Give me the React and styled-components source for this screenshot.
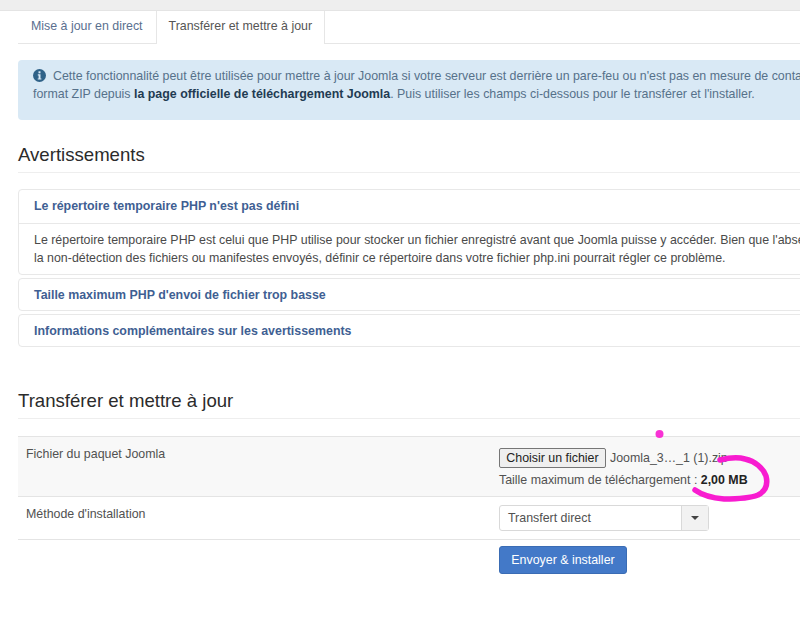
import styled, { createGlobalStyle } from 'styled-components';

const GlobalStyle = createGlobalStyle`
  html, body {
    margin: 0;
    padding: 0;
    background: #fff;
    overflow: hidden;
  }
  body {
    font-family: "Liberation Sans", Arial, sans-serif;
    font-size: 12.4px;
    line-height: 18px;
    color: #515151;
  }
`;

const Page = styled.div`
  position: relative;
  width: 800px;
  height: 623px;
  overflow: hidden;
`;

const TopBar = styled.div`
  height: 10px;
  background: #eeeeee;
  border-bottom: 1px solid #e4e4e4;
`;

const Content = styled.div`
  width: 1100px;
  padding-left: 18px;
`;

const Tabs = styled.div`
  display: flex;
  height: 32px;
  border-bottom: 1px solid #e6e6e6;
`;

const Tab = styled.div`
  padding: 6px 12px 0;
  margin-bottom: ${(p) => (p.$active ? '-1px' : '0')};
  background: #fff;
  color: ${(p) => (p.$active ? '#555555' : '#5a6f8f')};
  border-left: 1px solid ${(p) => (p.$active ? '#e6e6e6' : 'transparent')};
  border-right: 1px solid ${(p) => (p.$active ? '#e6e6e6' : 'transparent')};
`;

const Alert = styled.div`
  margin-top: 16px;
  height: 60px;
  box-sizing: border-box;
  padding: 8px 15px;
  background: #d9e9f5;
  border-radius: 4px;
  color: #56718a;
  white-space: nowrap;
  line-height: 17.5px;

  strong {
    color: #1f3b52;
  }
`;

const InfoIcon = styled.svg`
  width: 13px;
  height: 13px;
  margin-right: 7px;
  vertical-align: -2px;
`;

const Title = styled.h2`
  margin: ${(p) => p.$top} 0 0;
  height: 29px;
  box-sizing: border-box;
  border-bottom: 1px solid #eeeeee;
  font-size: 18.6px;
  line-height: 22px;
  font-weight: 400;
  color: #2b2b2b;
`;

const Accordion = styled.div`
  margin-top: 16px;
  display: flex;
  flex-direction: column;
  gap: 3px;
`;

const Group = styled.div`
  border: 1px solid #e8e8e8;
  border-radius: 4px;
`;

const GroupHead = styled.div`
  padding: 7px 14px 5px 15px;
  height: 19px;
  font-weight: 700;
  color: #3f5f93;
`;

const GroupBody = styled.div`
  margin-top: 2px;
  padding: 8px 15px 7px;
  border-top: 1px solid #e8e8e8;
  white-space: nowrap;
  line-height: 17.5px;
  color: #4a4a4a;
`;

const FormTable = styled.div`
  margin-top: 17px;
`;

const Row = styled.div`
  display: grid;
  grid-template-columns: 481px 1fr;
  min-height: ${(p) => p.$height};
  box-sizing: border-box;
  border-top: 1px solid #e4e4e4;
  background: ${(p) => (p.$striped ? '#f8f8f8' : '#fff')};
`;

const RowLabel = styled.div`
  padding: 8px;
`;

const RowValue = styled.div`
  padding-top: ${(p) => p.$top};
  color: #515151;
`;

const FileLine = styled.div`
  display: flex;
  align-items: center;
  height: 22px;
`;

const FileButton = styled.div`
  box-sizing: border-box;
  width: 107px;
  height: 20px;
  margin-right: 4px;
  background: #efefef;
  border: 1px solid #767676;
  border-radius: 2px;
  color: #222;
  text-align: center;
  line-height: 18px;
`;

const MaxSize = styled.div`
  margin-top: 2px;
  white-space: nowrap;

  strong {
    color: #222;
  }
`;

const SelectBox = styled.div`
  display: flex;
  width: 210px;
  height: 26px;
  box-sizing: border-box;
  border: 1px solid #d9d9d9;
  border-radius: 3px;
`;

const SelectText = styled.div`
  flex: 1;
  padding-left: 8px;
  line-height: 24px;
`;

const SelectArrow = styled.div`
  width: 26px;
  display: flex;
  align-items: center;
  justify-content: center;
  background: #f2f2f2;
  border-left: 1px solid #d9d9d9;

  &::after {
    content: '';
    border-left: 4px solid transparent;
    border-right: 4px solid transparent;
    border-top: 4px solid #444;
  }
`;

const SubmitRow = styled.div`
  border-top: 1px solid #e4e4e4;
  padding: 6px 0 0 481px;
`;

const SubmitButton = styled.div`
  box-sizing: border-box;
  width: 128px;
  height: 28px;
  background: #4379c8;
  border: 1px solid #3a6cb4;
  border-radius: 3px;
  color: #fff;
  text-align: center;
  line-height: 26px;
`;

const Scribble = styled.svg`
  position: absolute;
  left: 0;
  top: 0;
  width: 800px;
  height: 623px;
  pointer-events: none;
`;

const App = () => {
  return (
    <Page>
      <GlobalStyle />
      <TopBar />
      <Content>
        <Tabs>
          <Tab>Mise à jour en direct</Tab>
          <Tab $active>Transférer et mettre à jour</Tab>
        </Tabs>
        <Alert>
          <InfoIcon viewBox="0 0 13 13">
            <circle cx="6.5" cy="6.5" r="6.5" fill="#2f6288" />
            <rect x="5.5" y="2.3" width="2" height="2" fill="#d9e9f5" />
            <path d="M4.8 5.3h2.7v4.2h.9v1.1H4.7V9.5h.9V6.4h-.8z" fill="#d9e9f5" />
          </InfoIcon>
          Cette fonctionnalité peut être utilisée pour mettre à jour Joomla si votre serveur est derrière un pare-feu ou n'est pas en mesure de contacter le serveur de mise à jour.
          <br />
          format ZIP depuis <strong>la page officielle de téléchargement Joomla</strong>. Puis utiliser les champs ci-dessous pour le transférer et l'installer.
        </Alert>
        <Title $top="24px">Avertissements</Title>
        <Accordion>
          <Group>
            <GroupHead>Le répertoire temporaire PHP n'est pas défini</GroupHead>
            <GroupBody>
              Le répertoire temporaire PHP est celui que PHP utilise pour stocker un fichier enregistré avant que Joomla puisse y accéder. Bien que l'absence de ce paramètre
              <br />
              la non-détection des fichiers ou manifestes envoyés, définir ce répertoire dans votre fichier php.ini pourrait régler ce problème.
            </GroupBody>
          </Group>
          <Group>
            <GroupHead>Taille maximum PHP d'envoi de fichier trop basse</GroupHead>
          </Group>
          <Group>
            <GroupHead>Informations complémentaires sur les avertissements</GroupHead>
          </Group>
        </Accordion>
        <Title $top="43px">Transférer et mettre à jour</Title>
        <FormTable>
          <Row $striped $height="60px">
            <RowLabel>Fichier du paquet Joomla</RowLabel>
            <RowValue $top="10px">
              <FileLine>
                <FileButton>Choisir un fichier</FileButton>
                Joomla_3…_1 (1).zip
              </FileLine>
              <MaxSize>
                Taille maximum de téléchargement : <strong>2,00 MB</strong>
              </MaxSize>
            </RowValue>
          </Row>
          <Row $height="43px">
            <RowLabel>Méthode d'installation</RowLabel>
            <RowValue $top="8px">
              <SelectBox>
                <SelectText>Transfert direct</SelectText>
                <SelectArrow />
              </SelectBox>
            </RowValue>
          </Row>
          <SubmitRow>
            <SubmitButton>Envoyer &amp; installer</SubmitButton>
          </SubmitRow>
        </FormTable>
      </Content>
      <Scribble viewBox="0 0 800 623">
        <circle cx="659.5" cy="434" r="4" fill="#f81cd0" opacity="0.9" />
        <path
          d="M720 460C728 458 738 457 745 459C755 461 763 468 766 476C768 484 766 491 758 495C748 499 735 499 724 499C712 498 702 495 695 490"
          fill="none"
          stroke="#f81cd0"
          strokeWidth="5.5"
          strokeLinecap="round"
        />
      </Scribble>
    </Page>
  );
};

export default App;
